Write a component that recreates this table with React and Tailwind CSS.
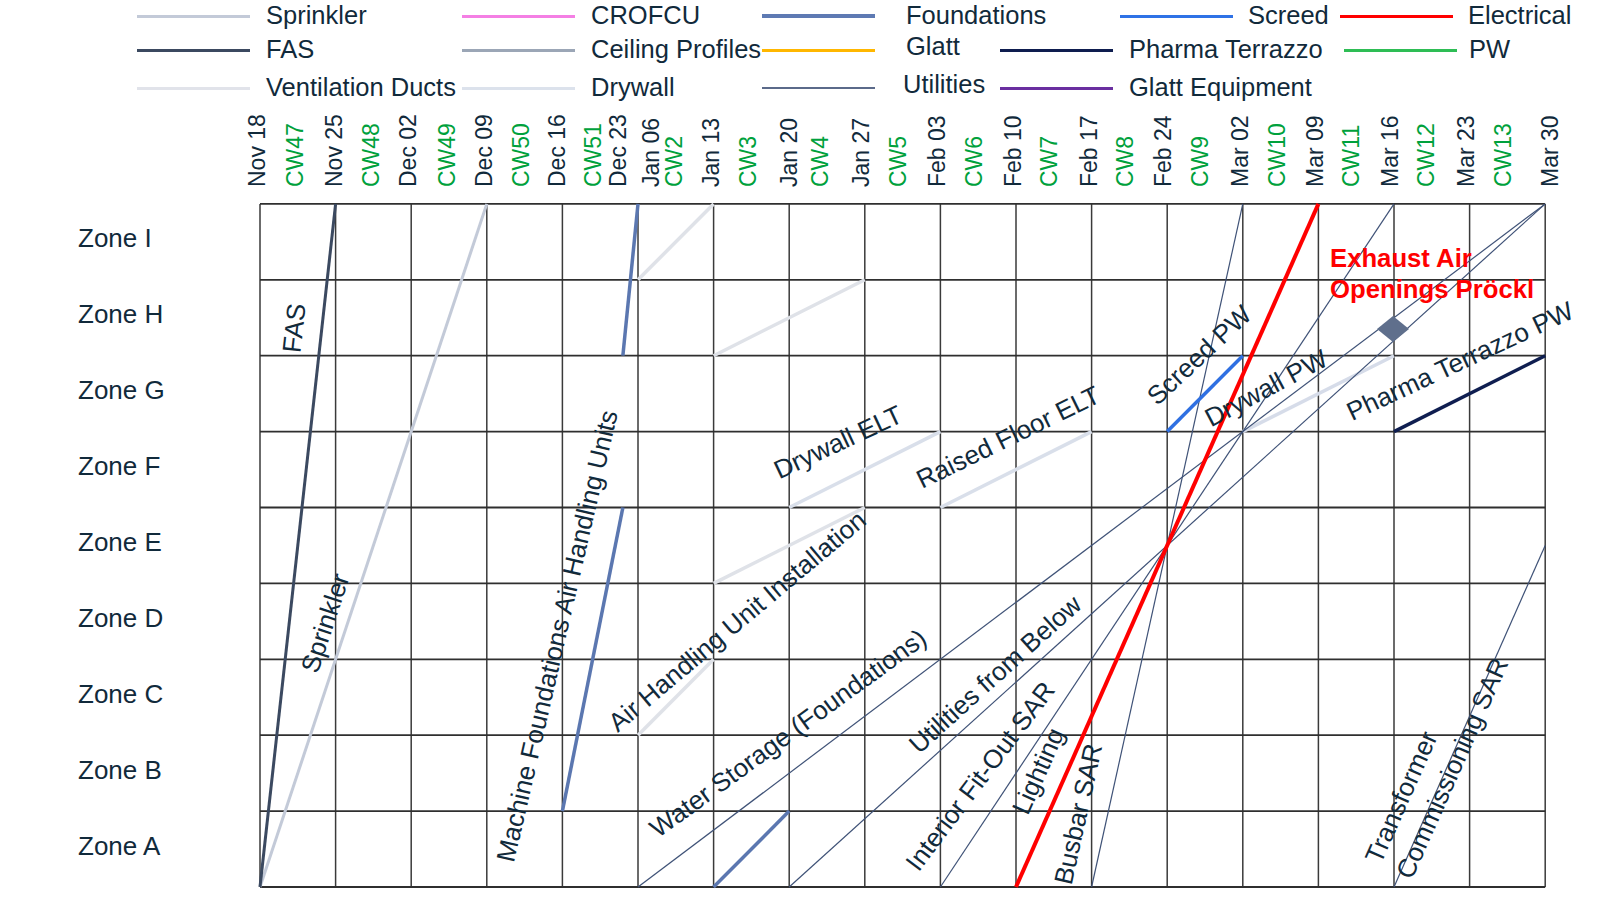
import React from 'react';

// line-of-balance chart: columns are weeks, rows are zones
const X = (i) => 260 + i * 75.6;
const Y = (k) => 887 - k * 75.9;

const LEGEND_ROWS = [
  {
    h: 'h-[32px]',
    items: [
      { label: 'Sprinkler', color: '#c3cad8', w: 'w-[325px]', gap: 'ml-[16px]' },
      { label: 'CROFCU', color: '#f47fe4', w: 'w-[300px]', gap: 'ml-[16px]' },
      { label: 'Foundations', color: '#5e7ab3', w: 'w-[358px]', gap: 'ml-[31px]', thick: true },
      { label: 'Screed', color: '#2f72e6', w: 'w-[220px]', gap: 'ml-[15px]' },
      { label: 'Electrical', color: '#ff0000', w: 'w-[200px]', gap: 'ml-[15px]' },
    ],
  },
  {
    h: 'h-[36px]',
    items: [
      { label: 'FAS', color: '#3b4960', w: 'w-[325px]', gap: 'ml-[16px]' },
      { label: 'Ceiling Profiles', color: '#9ba6b6', w: 'w-[300px]', gap: 'ml-[16px]' },
      { label: 'Glatt', color: '#ffb700', w: 'w-[238px]', gap: 'ml-[31px]', up: true },
      { label: 'Pharma Terrazzo', color: '#0e1d4f', w: 'w-[344px]', gap: 'ml-[16px]' },
      { label: 'PW', color: '#2ebd55', w: 'w-[200px]', gap: 'ml-[12px]' },
    ],
  },
  {
    h: 'h-[40px]',
    items: [
      { label: 'Ventilation Ducts', color: '#e1e3ea', w: 'w-[325px]', gap: 'ml-[16px]' },
      { label: 'Drywall', color: '#dce2ec', w: 'w-[300px]', gap: 'ml-[16px]' },
      { label: 'Utilities', color: '#5b6a8a', w: 'w-[238px]', gap: 'ml-[28px]', thin: true, up: true },
      { label: 'Glatt Equipment', color: '#6a2fa0', w: 'w-[300px]', gap: 'ml-[16px]' },
    ],
  },
];

const ZONES = ['Zone I', 'Zone H', 'Zone G', 'Zone F', 'Zone E', 'Zone D', 'Zone C', 'Zone B', 'Zone A'];

const TICKS = [
  ['Nov 18', 257], ['CW47', 295], ['Nov 25', 334], ['CW48', 371], ['Dec 02', 408], ['CW49', 447],
  ['Dec 09', 484], ['CW50', 521], ['Dec 16', 557], ['CW51', 593], ['Dec 23', 618], ['Jan 06', 651],
  ['CW2', 674], ['Jan 13', 711], ['CW3', 748], ['Jan 20', 789], ['CW4', 820], ['Jan 27', 861],
  ['CW5', 898], ['Feb 03', 937], ['CW6', 974], ['Feb 10', 1013], ['CW7', 1049], ['Feb 17', 1089],
  ['CW8', 1125], ['Feb 24', 1163], ['CW9', 1200], ['Mar 02', 1240], ['CW10', 1277], ['Mar 09', 1315],
  ['CW11', 1351], ['Mar 16', 1390], ['CW12', 1426], ['Mar 23', 1466], ['CW13', 1503], ['Mar 30', 1550],
];

const LIGHT = '#dfe2e8';
const FOUND = '#5b77b0';
const UTIL = '#3f5277';

// [fromCol, fromLevel, toCol, toLevel, colour, width]
const SEGMENTS = [
  [0, 0, 3, 9, '#c3cad8', 3],
  [0, 0, 1, 9, '#3b4960', 3],
  [4, 1, 4.8, 5, FOUND, 3.5],
  [4.8, 7, 5, 9, FOUND, 3.5],
  [5, 8, 6, 9, LIGHT, 3.5],
  [6, 7, 8, 8, LIGHT, 3.5],
  [5, 2, 6, 3, LIGHT, 3.5],
  [6, 4, 8, 5, LIGHT, 3.5],
  [7, 5, 9, 6, '#d9dfea', 3.5],
  [9, 5, 11, 6, '#d9dfea', 3.5],
  [13, 6, 15, 7, '#d6dce9', 3.5],
  [6, 0, 7, 1, FOUND, 3.5],
  [5, 0, 17, 9, UTIL, 1.2],
  [7, 0, 17, 9, UTIL, 1.2],
  [9, 0, 15, 9, UTIL, 1.2],
  [11, 0, 13, 9, UTIL, 1.2],
  [15, 0, 17, 4.5, UTIL, 1.2],
  [12, 6, 13, 7, '#2f70e2', 3.5],
  [15, 6, 17, 7, '#0f1e50', 3.5],
  [10, 0, 14, 9, '#ff0000', 4],
];

// [text, cx, cy, angle]
const LABELS = [
  ['FAS', 294, 328, -83.7],
  ['Sprinkler', 325, 623, -71.6],
  ['Machine Foundations Air Handling Units', 557, 636, -77],
  ['Air Handling Unit Installation', 737, 621, -40],
  ['Water Storage (Foundations)', 788, 733, -36],
  ['Utilities from Below', 995, 674, -42],
  ['Interior Fit-Out SAR', 980, 776, -53],
  ['Lighting', 1038, 771, -66],
  ['Busbar SAR', 1078, 814, -77.5],
  ['Transformer', 1401, 797, -66],
  ['Commissioning SAR', 1452, 768, -66],
  ['Drywall ELT', 838, 442, -25],
  ['Raised Floor ELT', 1008, 437, -26],
  ['Screed PW', 1199, 355, -43],
  ['Drywall PW', 1266, 388, -28],
  ['Pharma Terrazzo PW', 1460, 361, -25],
];

function Legend() {
  return (
    <div className="flex flex-col pl-[137px]">
      {LEGEND_ROWS.map((row, r) => (
        <div key={r} className={`flex items-center ${row.h}`}>
          {row.items.map((it) => (
            <div key={it.label} className={`flex items-center shrink-0 ${it.w}`}>
              <div
                className={`w-[113px] shrink-0 ${it.thin ? 'h-[2px]' : it.thick ? 'h-[3.5px]' : 'h-[3px]'}`}
                style={{ backgroundColor: it.color }}
              />
              <span className={`whitespace-nowrap text-[25.5px] leading-none ${it.gap} ${it.up ? '-translate-y-[3px]' : ''}`}>
                {it.label}
              </span>
            </div>
          ))}
        </div>
      ))}
    </div>
  );
}

function Chart() {
  return (
    <svg width="1360" height="792" viewBox="240 108 1360 792" className="block shrink-0">
      {/* week axis, read bottom to top */}
      {TICKS.map(([t, x]) => (
        <text
          key={t}
          transform={`translate(${x} 187) rotate(-90)`}
          textAnchor="start"
          dy="0.35em"
          fontSize="23"
          fill={t.startsWith('CW') ? '#00a13c' : '#112a3b'}
        >
          {t}
        </text>
      ))}

      {/* grid */}
      {Array.from({ length: 18 }, (_, i) => (
        <line key={`v${i}`} x1={X(i)} y1={Y(9)} x2={X(i)} y2={Y(0)} stroke="#3a3a3a" strokeWidth="1.5" />
      ))}
      {Array.from({ length: 10 }, (_, k) => (
        <line key={`h${k}`} x1={X(0)} y1={Y(k)} x2={X(17)} y2={Y(k)} stroke="#2f2f2f" strokeWidth="1.8" />
      ))}

      {/* activity lines */}
      {SEGMENTS.map(([a, b, c, d, col, w], n) => (
        <line key={n} x1={X(a)} y1={Y(b)} x2={X(c)} y2={Y(d)} stroke={col} strokeWidth={w} />
      ))}

      {/* milestone */}
      <polygon points="1377,329 1393,316 1409,329 1393,342" fill="#5f6f8c" />

      {/* activity labels */}
      {LABELS.map(([t, x, y, a]) => (
        <text
          key={t}
          transform={`translate(${x} ${y}) rotate(${a})`}
          textAnchor="middle"
          dy="0.35em"
          fontSize="26"
          fill="#112a3b"
        >
          {t}
        </text>
      ))}

      <text x="1330" y="266.5" fontSize="25.7" fontWeight="700" fill="#ff0000">Exhaust Air</text>
      <text x="1330" y="298" fontSize="25.7" fontWeight="700" fill="#ff0000">Openings Pröckl</text>
    </svg>
  );
}

export default function App() {
  return (
    <div className="w-[1600px] h-[900px] overflow-hidden bg-white text-[#112a3b] font-['Liberation_Sans',Arial,sans-serif]">
      <Legend />
      <div className="flex">
        <div className="w-[240px] shrink-0 pt-[96px] flex flex-col">
          {ZONES.map((z) => (
            <div key={z} className="h-[75.9px] flex items-center pl-[78px] pb-[6px] text-[26px]">
              {z}
            </div>
          ))}
        </div>
        <Chart />
      </div>
    </div>
  );
}
